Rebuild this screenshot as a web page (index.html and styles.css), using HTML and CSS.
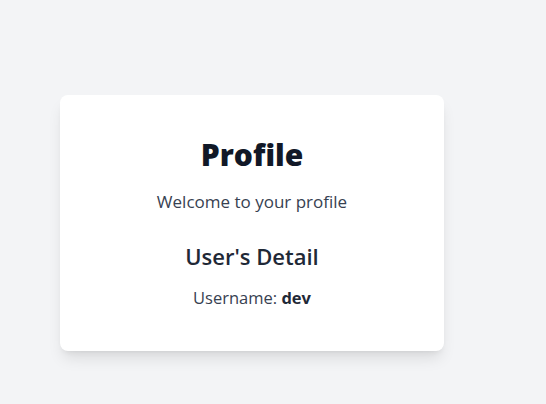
FILE: index.html
```html
<!DOCTYPE html>
<html>
<head>
<meta charset="utf-8">
<link rel="stylesheet" href="styles.css">
</head>
<body>
<main class="page">
  <section class="card">
    <h1 class="title">Profile</h1>
    <p class="welcome">Welcome to your profile</p>
    <h2 class="subtitle">User's Detail</h2>
    <p class="username">Username: <strong>dev</strong></p>
  </section>
</main>
</body>
</html>
```

FILE: styles.css
```css
html, body {
  margin: 0;
  padding: 0;
  background: #f3f4f6;
  font-family: "Open Sans", "Noto Sans", sans-serif;
}
.page {
  padding: 95px 0 0 60px;
  min-height: 404px;
  box-sizing: border-box;
}
.card {
  width: 384px;
  height: 256px;
  box-sizing: border-box;
  background: #fff;
  border-radius: 8px;
  box-shadow: 0 10px 15px -3px rgba(0,0,0,0.1), 0 4px 6px -4px rgba(0,0,0,0.1);
  display: flex;
  flex-direction: column;
  align-items: center;
  padding-top: 42px;
}
.title {
  margin: 0;
  font-size: 30px;
  line-height: 36px;
  font-weight: 800;
  color: #111827;
}
.welcome {
  margin: 15px 0 0;
  font-size: 17px;
  line-height: 28px;
  color: #374151;
}
.subtitle {
  margin: 25px 0 0;
  font-size: 22px;
  line-height: 30px;
  font-weight: 600;
  color: #1f2937;
}
.username {
  margin: 15px 0 0;
  font-size: 16.5px;
  line-height: 24px;
  color: #374151;
}
.username strong {
  font-weight: 700;
  color: #1f2937;
}
```
